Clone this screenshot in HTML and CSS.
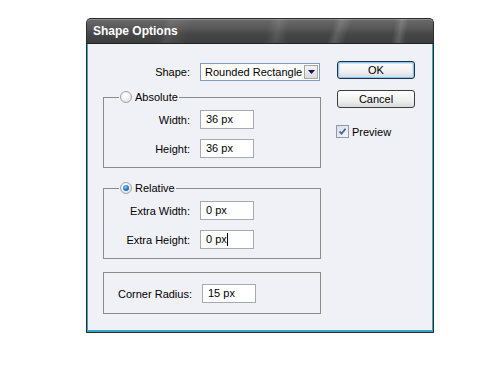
FILE: index.html
```html
<!DOCTYPE html>
<html lang="en">
<head>
  <meta charset="UTF-8">
  <title>Shape Options</title>
  <link rel="stylesheet" href="styles.css">
</head>
<body>

<div class="window">
  <div class="titlebar">Shape Options</div>
  <div class="client">
    <div class="fields">
      <div class="row row-top">
        <span class="lbl lbl-shape">Shape:</span>
        <div class="select">
          <span class="select-text">Rounded Rectangle</span>
          <span class="select-btn">
            <svg width="7" height="4" viewBox="0 0 7 4"><path d="M0 0h7L3.5 4z" fill="#101060"/></svg>
          </span>
        </div>
      </div>

      <fieldset class="group">
        <legend><span class="radio"></span>Absolute</legend>
        <div class="row">
          <span class="lbl">Width:</span>
          <div class="input">36 px</div>
        </div>
        <div class="row">
          <span class="lbl">Height:</span>
          <div class="input">36 px</div>
        </div>
      </fieldset>

      <fieldset class="group">
        <legend><span class="radio checked"></span>Relative</legend>
        <div class="row">
          <span class="lbl">Extra Width:</span>
          <div class="input">0 px</div>
        </div>
        <div class="row">
          <span class="lbl">Extra Height:</span>
          <div class="input">0 px<span class="caret"></span></div>
        </div>
      </fieldset>

      <div class="group group-plain">
        <div class="row">
          <span class="lbl lbl-wide">Corner Radius:</span>
          <div class="input">15 px</div>
        </div>
      </div>
    </div>

    <div class="actions">
      <button class="btn btn-default">OK</button>
      <button class="btn">Cancel</button>
      <div class="check">
        <span class="checkbox">
          <svg width="11" height="11" viewBox="0 0 11 11"><path d="M2.5 5.5l2 2.2 4-5" fill="none" stroke="#4b5f9e" stroke-width="1.8"/></svg>
        </span>
        Preview
      </div>
    </div>
  </div>
</div>

</body>
</html>
```

FILE: styles.css
```css
body, html {
  margin: 0;
  padding: 0;
  background: #fff;
}

body {
  padding: 18px 0 0 86px;
  font-family: "Liberation Sans", Arial, sans-serif;
  font-size: 11px;
  color: #000;
}

.window {
  width: 348px;
}

.titlebar {
  height: 26px;
  box-sizing: border-box;
  padding: 0 0 0 6px;
  line-height: 25px;
  border: 1px solid #2c2c2c;
  border-bottom-color: #232323;
  border-radius: 5px 5px 0 0;
  color: #fff;
  font-weight: bold;
  font-size: 12px;
  box-shadow: inset 0 1px rgba(255, 255, 255, 0.25);
  background:
    linear-gradient(105deg, transparent 22%, rgba(255,255,255,0.08) 24%, transparent 30%),
    linear-gradient(100deg, transparent 52%, rgba(255,255,255,0.1) 55%, transparent 58%),
    linear-gradient(110deg, transparent 70%, rgba(255,255,255,0.14) 72%, transparent 75%),
    linear-gradient(100deg, transparent 88%, rgba(255,255,255,0.16) 90%, transparent 92%),
    linear-gradient(to bottom, #6a6a6a 0%, #575757 40%, #474747 60%, #3e3e3e 100%);
}

.client {
  display: flex;
  gap: 16px;
  padding: 18px 17px 18px 16px;
  background: #f0f1f6;
  border: 1px solid #2d2d2d;
  border-top: 0;
  box-shadow: inset 1px 0 #36a6c8, inset -1px 0 #36a6c8, inset 0 -2px #36a6c8;
}

.fields {
  width: 218px;
}

.row {
  display: flex;
  align-items: center;
  gap: 10px;
  height: 19px;
}

.row + .row {
  margin-top: 10px;
}

.row-top {
  margin-top: 1px;
  height: 18px;
}

.lbl {
  width: 86px;
  text-align: right;
  white-space: nowrap;
}

.lbl-shape {
  width: 87px;
}

.lbl-wide {
  width: 88px;
}

.select {
  display: flex;
  align-items: center;
  width: 120px;
  height: 18px;
  box-sizing: border-box;
  border: 1px solid #7f9db9;
  background: #fff;
  padding: 1px;
}

.select-text {
  flex: 1;
  padding-left: 3px;
  line-height: 14px;
}

.select-btn {
  display: flex;
  align-items: center;
  justify-content: center;
  width: 14px;
  height: 14px;
  box-sizing: border-box;
  border: 1px solid #a7a7a7;
  background: linear-gradient(#f4f4f4, #dcdcdc);
}

.input {
  width: 54px;
  height: 19px;
  box-sizing: border-box;
  border: 1px solid #a4abb4;
  background: #fff;
  padding-left: 5px;
  line-height: 17px;
}

.caret {
  display: inline-block;
  width: 1px;
  height: 13px;
  background: #000;
  vertical-align: -3px;
}

.group {
  margin: 13px 0 0;
  padding: 6px 0 9px;
  border: 1px solid #8c8c8c;
  min-width: 0;
}

.fields > .group:first-of-type {
  margin-top: 9px;
}

.group legend {
  display: flex;
  align-items: center;
  gap: 3px;
  height: 14px;
  line-height: 14px;
  margin-left: 15px;
  padding: 0 1px;
}

.group-plain {
  margin-top: 13px;
  padding: 11px 0 10px;
}

.radio {
  position: relative;
  width: 12px;
  height: 12px;
  box-sizing: border-box;
  border-radius: 50%;
  border: 1px solid #9aa3ad;
  background: radial-gradient(circle at 40% 35%, #fff 20%, #d9dde3 90%);
}

.radio.checked::after {
  content: "";
  position: absolute;
  left: 2px;
  top: 2px;
  width: 6px;
  height: 6px;
  border-radius: 50%;
  background: radial-gradient(circle at 40% 35%, #9ad0f5 0%, #2d7fd0 45%, #13488d 100%);
}

.actions {
  display: flex;
  flex-direction: column;
  width: 78px;
}

.btn {
  height: 18px;
  padding: 0;
  font: inherit;
  color: #000;
  border: 1px solid #3d3d3d;
  border-radius: 3px;
  background: linear-gradient(#fefefe, #f0f0f0 60%, #d9d9d9);
}

.btn-default {
  margin-top: -1px;
  border-color: #1f2f48;
  box-shadow: inset 0 0 0 1px #8fc6f0, inset 0 0 0 2px #c6e3f8;
}

.btn + .btn {
  margin-top: 11px;
}

.check {
  display: flex;
  align-items: center;
  gap: 3px;
  margin: 17px 0 0 -1px;
}

.checkbox {
  display: flex;
  align-items: center;
  justify-content: center;
  width: 13px;
  height: 13px;
  box-sizing: border-box;
  border: 1px solid #8e9aad;
  background: linear-gradient(135deg, #d8dce4, #f6f7f9);
}
```
